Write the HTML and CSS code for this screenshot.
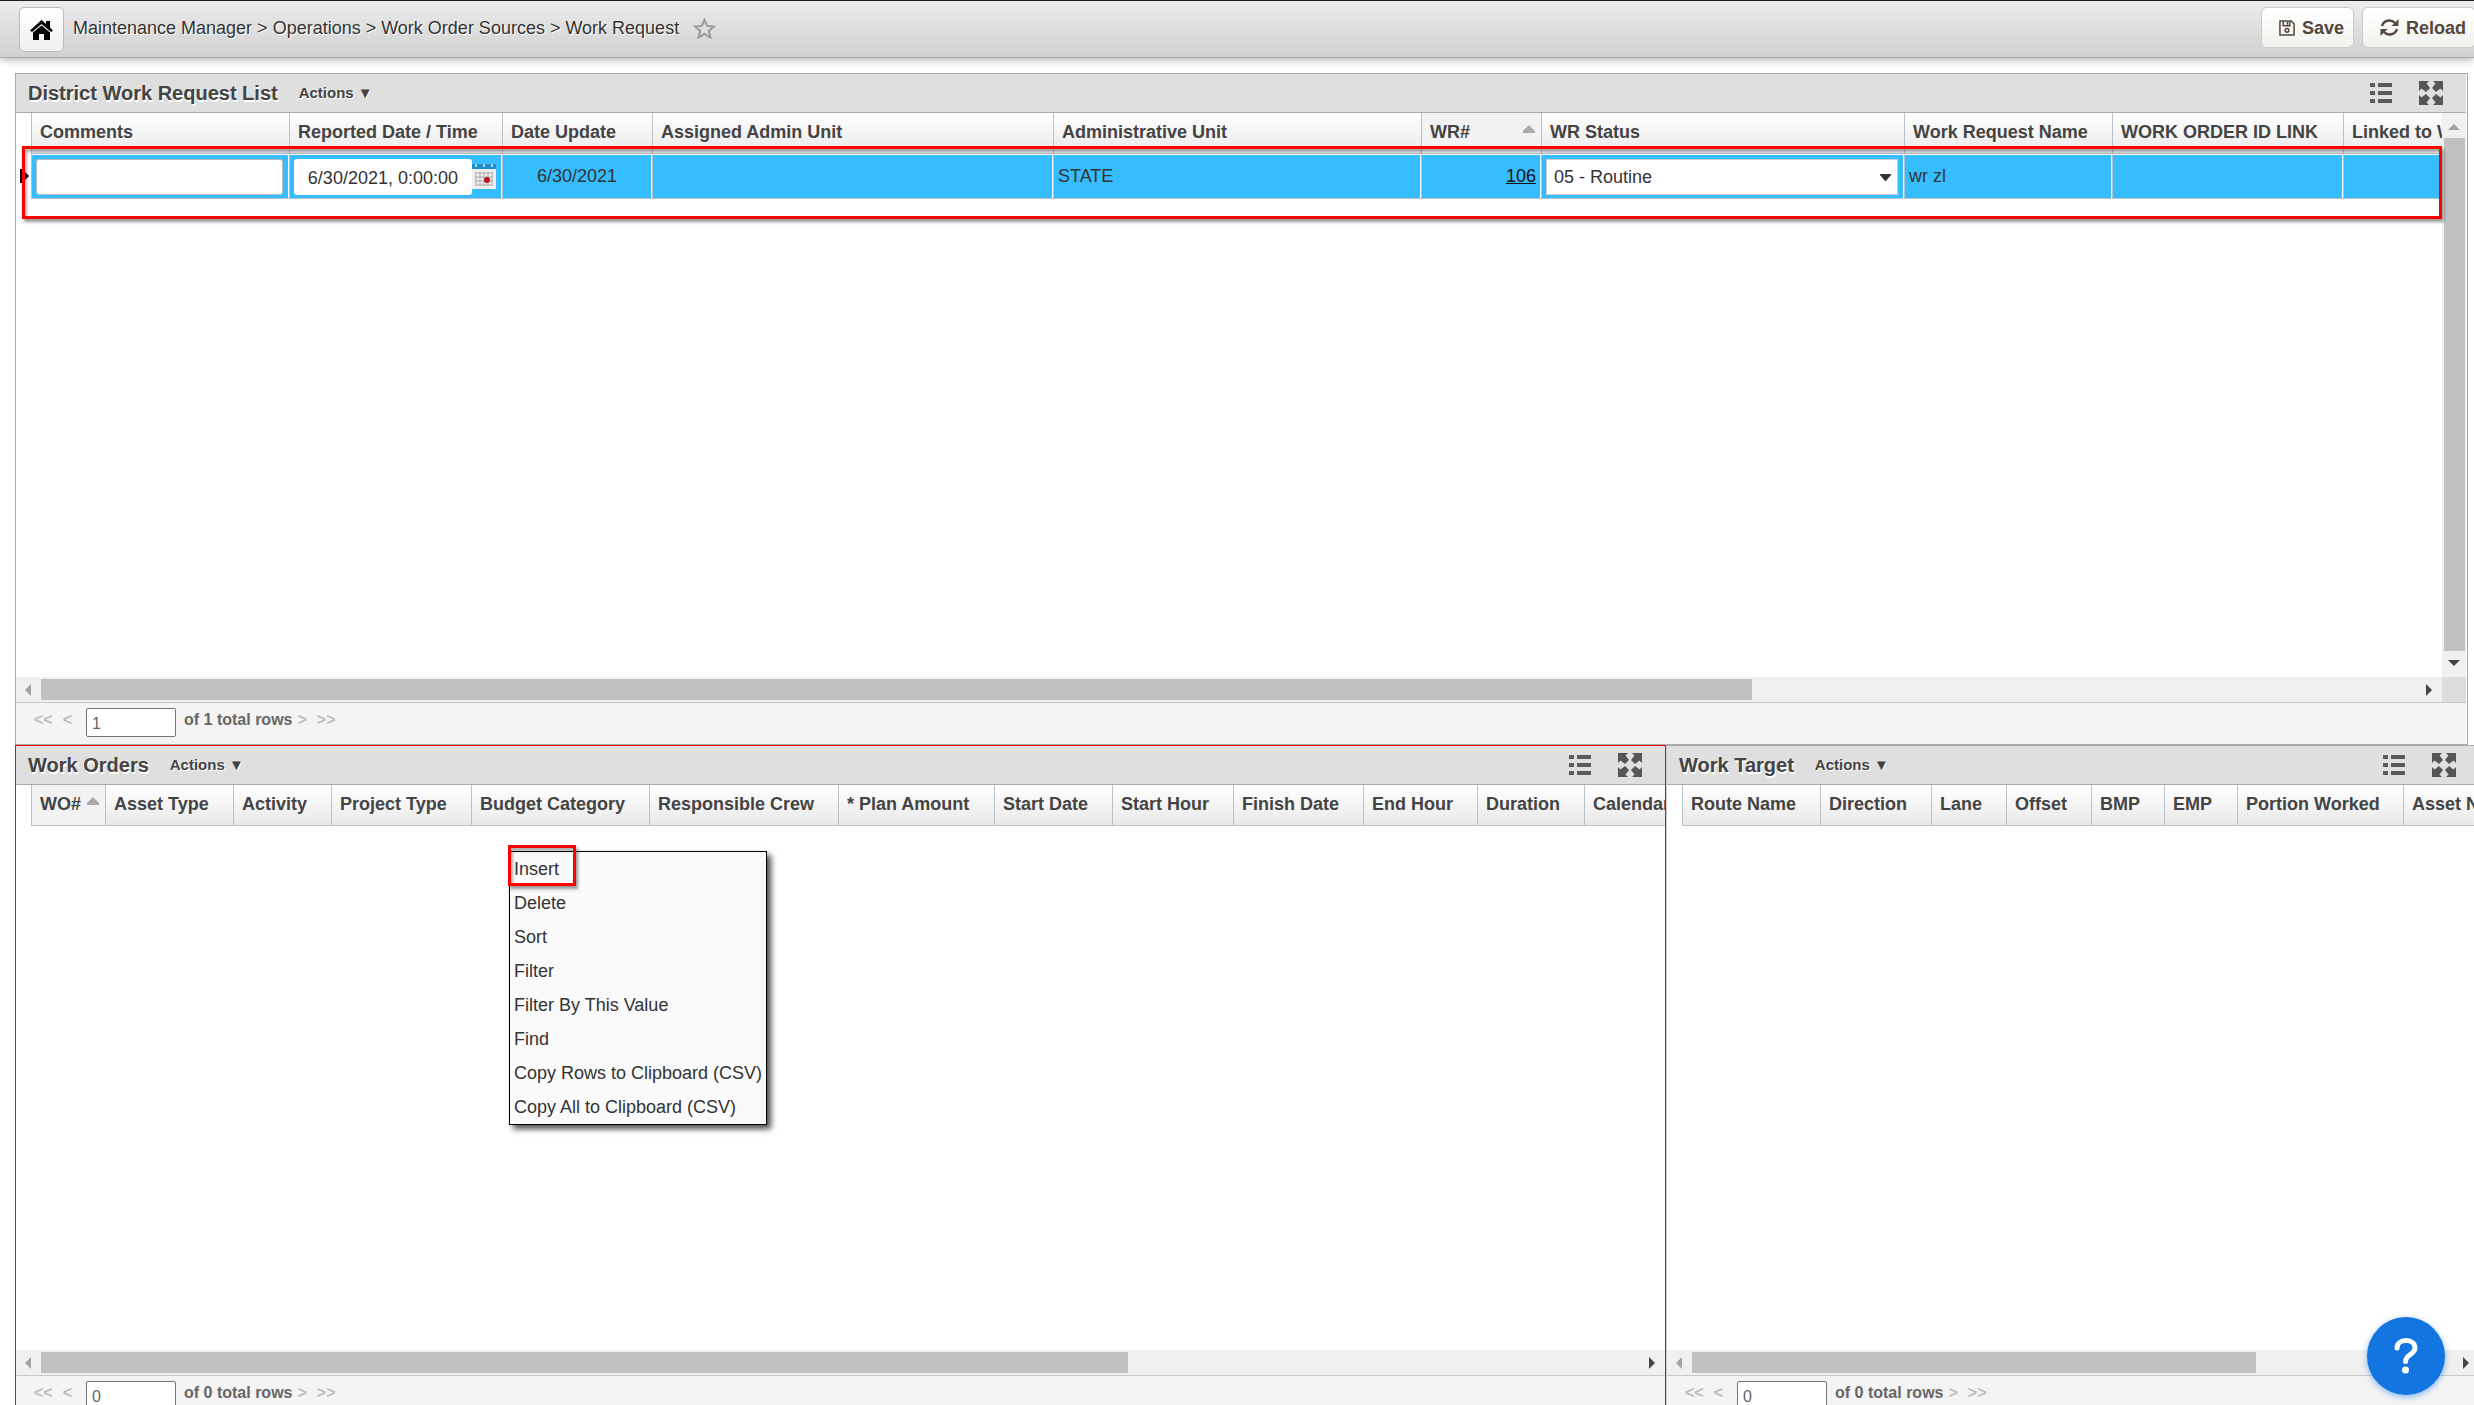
FILE: index.html
```html
<!DOCTYPE html>
<html lang="en">
<head>
<meta charset="utf-8">
<title>Work Request</title>
<link rel="stylesheet" href="styles.css">
</head>
<body>
<svg class="defs" aria-hidden="true">
  <symbol id="i-list" viewBox="0 0 22 20"><path d="M0 0h5v4H0zM8 0h14v4H8zM0 8h5v4H0zM8 8h14v4H8zM0 16h5v4H0zM8 16h14v4H8z" fill="#5a5c5a"/></symbol>
  <symbol id="i-expand" viewBox="0 0 24 24"><path d="M0 0h10L7.500 2.500 11 7 7 11 2.500 7.500 0 10zM24 0v10l-2.500-2.500L17 11l-4-4 3.500-4.500L14 0zM0 24V14l2.500 2.500L7 13l4 4-3.500 4.500L10 24zM24 24H14l2.500-2.500L13 17l4-4 4.500 3.500L24 14z" fill="#555755"/></symbol>
  <symbol id="i-left" viewBox="0 0 6 12"><path d="M6 0v12L0 6z"/></symbol>
  <symbol id="i-right" viewBox="0 0 6 12"><path d="M0 0v12l6-6z"/></symbol>
  <symbol id="i-up" viewBox="0 0 12 6"><path d="M0 6h12L6 0z"/></symbol>
  <symbol id="i-down" viewBox="0 0 12 6"><path d="M0 0h12L6 6z"/></symbol>
</svg>
<div class="page">
  <header class="topbar">
    <button class="home" type="button" aria-label="Home"><svg width="23" height="20" viewBox="0 0 23 20"><path d="M11.500 0L16 4V1h4v6.500L23 10.500l-2 1.500-9.500-8L2 12l-2-1.500z"/><path d="M11.500 5.500L20 12.500V20h-6v-6H9v6H3v-7.500z"/></svg></button>
    <nav class="crumbs">Maintenance Manager &gt; Operations &gt; Work Order Sources &gt; Work Request</nav>
    <svg class="star" width="23" height="21" viewBox="0 0 23 21"><path d="M11.500 1.800l2.700 6.100 6.800.6-5.200 4.400 1.700 6.600-6-3.700-6 3.700 1.700-6.600L2 8.500l6.800-.6z" fill="none" stroke="#999" stroke-width="2"/></svg>
    <div class="tools">
      <button class="tool" type="button"><svg width="16" height="16" viewBox="0 0 17 17" fill="none" stroke="#54473d" stroke-width="1.600"><path d="M1 1h12l3 3v12H1zM4.500 1v5h7V1M9 2v3"/><circle cx="8.500" cy="11" r="2"/></svg>Save</button>
      <button class="tool reload" type="button"><svg width="19" height="19" viewBox="0 0 19 19"><path d="M2 8a7.500 7 0 0 1 13-3M17 11a7.500 7 0 0 1-13 3" fill="none" stroke="#54473d" stroke-width="2.400"/><path d="M18.500 1v7h-7zM.5 18v-7h7z" fill="#54473d"/></svg>Reload</button>
    </div>
  </header>

  <main class="main">
    <section class="panel requests">
      <div class="bar"><h2>District Work Request List</h2><button class="actions" type="button">Actions ▼</button>
        <button class="icon" type="button" aria-label="List view"><svg width="22" height="20"><use href="#i-list"/></svg></button><button class="icon" type="button" aria-label="Expand"><svg width="24" height="24"><use href="#i-expand"/></svg></button></div>
      <div class="view">
        <div class="rows">
          <table class="grid">
            <colgroup><col style="width:15px"><col style="width:258px"><col style="width:213px"><col style="width:150px"><col style="width:401px"><col style="width:368px"><col style="width:120px"><col style="width:363px"><col style="width:208px"><col style="width:231px"><col style="width:200px"></colgroup>
            <thead><tr><td></td><th>Comments</th><th>Reported Date / Time</th><th>Date Update</th><th>Assigned Admin Unit</th><th>Administrative Unit</th><th class="sorted"><div>WR#<svg width="12" height="8" viewBox="0 0 12 8"><path d="M0 8V6l6-6 6 6v2z"/></svg></div></th><th>WR Status</th><th>Work Request Name</th><th>WORK ORDER ID LINK</th><th>Linked to WO</th></tr></thead>
            <tbody><tr>
              <td class="marker"><svg width="9" height="14" viewBox="0 0 9 14"><path d="M0 0h2l7 7-7 7H0z"/></svg></td>
              <td class="field"><input class="comment" type="text" aria-label="Comments"></td>
              <td class="field"><div class="date"><input type="text" value="6/30/2021, 0:00:00" aria-label="Reported Date / Time"><button type="button" aria-label="Pick date"><svg width="24" height="25" viewBox="0 0 24 25"><path d="M0 0h24v5H0z" fill="#168fd0"/><path d="M0 5h24v20H0z" fill="#eee"/><path d="M4 0v3M12 0v3M20 0v3" stroke="#ccc" stroke-width="2"/><path d="M3 9h18M3 13h18M3 17h18M3 21h18M4 8v14M8 8v14M12 8v14M16 8v14M20 8v14" stroke="#aaa"/><circle cx="15" cy="16" r="3" fill="#c4101c"/></svg></button></div></td>
              <td class="center">6/30/2021</td><td></td><td>STATE</td><td class="num"><a href="#wr-106">106</a></td>
              <td class="field"><div class="pick"><select aria-label="WR Status"><option>05 - Routine</option></select><svg width="11" height="7" viewBox="0 0 11 7"><path d="M0 0h11v1L6 7H5L0 1z"/></svg></div></td>
              <td>wr zl</td><td></td><td></td>
            </tr></tbody>
          </table>
        </div>
        <div class="vscroll"><svg width="12" height="6" class="dim"><use href="#i-up"/></svg><div class="thumb"></div><svg width="12" height="6"><use href="#i-down"/></svg></div>
      </div>
      <div class="hscroll"><svg width="6" height="12" class="dim"><use href="#i-left"/></svg><div class="track"><div class="thumb" style="width:72%"></div></div><svg width="6" height="12"><use href="#i-right"/></svg><i class="corner"></i></div>
      <div class="pager"><a href="#first">&lt;&lt;</a><a href="#prev">&lt;</a><input type="text" value="1" aria-label="Row number"><b>of 1 total rows</b><a href="#next">&gt;</a><a href="#last">&gt;&gt;</a></div>
      <div class="mark row-mark"></div>
    </section>

    <div class="lower">
      <section class="panel orders">
        <div class="bar"><h2>Work Orders</h2><button class="actions" type="button">Actions ▼</button>
          <button class="icon" type="button" aria-label="List view"><svg width="22" height="20"><use href="#i-list"/></svg></button><button class="icon" type="button" aria-label="Expand"><svg width="24" height="24"><use href="#i-expand"/></svg></button></div>
        <div class="view"><div class="rows">
          <table class="grid">
            <colgroup><col style="width:15px"><col style="width:74px"><col style="width:128px"><col style="width:98px"><col style="width:140px"><col style="width:178px"><col style="width:189px"><col style="width:156px"><col style="width:118px"><col style="width:121px"><col style="width:130px"><col style="width:114px"><col style="width:107px"><col style="width:150px"></colgroup>
            <thead><tr><td></td><th class="sorted"><div>WO#<svg width="12" height="8" viewBox="0 0 12 8"><path d="M0 8V6l6-6 6 6v2z"/></svg></div></th><th>Asset Type</th><th>Activity</th><th>Project Type</th><th>Budget Category</th><th>Responsible Crew</th><th>* Plan Amount</th><th>Start Date</th><th>Start Hour</th><th>Finish Date</th><th>End Hour</th><th>Duration</th><th>Calendar</th></tr></thead>
          </table>
        </div></div>
        <div class="hscroll"><svg width="6" height="12" class="dim"><use href="#i-left"/></svg><div class="track"><div class="thumb" style="width:68%"></div></div><svg width="6" height="12"><use href="#i-right"/></svg></div>
        <div class="pager"><a href="#first">&lt;&lt;</a><a href="#prev">&lt;</a><input type="text" value="0" aria-label="Row number"><b>of 0 total rows</b><a href="#next">&gt;</a><a href="#last">&gt;&gt;</a></div>
        <div class="menu" role="menu">
          <button type="button" role="menuitem">Insert</button><button type="button" role="menuitem">Delete</button><button type="button" role="menuitem">Sort</button><button type="button" role="menuitem">Filter</button><button type="button" role="menuitem">Filter By This Value</button><button type="button" role="menuitem">Find</button><button type="button" role="menuitem">Copy Rows to Clipboard (CSV)</button><button type="button" role="menuitem">Copy All to Clipboard (CSV)</button>
          <div class="mark item-mark"></div>
        </div>
      </section>

      <section class="panel target">
        <div class="bar"><h2>Work Target</h2><button class="actions" type="button">Actions ▼</button>
          <button class="icon" type="button" aria-label="List view"><svg width="22" height="20"><use href="#i-list"/></svg></button><button class="icon" type="button" aria-label="Expand"><svg width="24" height="24"><use href="#i-expand"/></svg></button></div>
        <div class="view"><div class="rows">
          <table class="grid">
            <colgroup><col style="width:15px"><col style="width:138px"><col style="width:111px"><col style="width:75px"><col style="width:85px"><col style="width:73px"><col style="width:73px"><col style="width:166px"><col style="width:150px"></colgroup>
            <thead><tr><td></td><th>Route Name</th><th>Direction</th><th>Lane</th><th>Offset</th><th>BMP</th><th>EMP</th><th>Portion Worked</th><th>Asset Name</th></tr></thead>
          </table>
        </div></div>
        <div class="hscroll"><svg width="6" height="12" class="dim"><use href="#i-left"/></svg><div class="track"><div class="thumb" style="width:74%"></div></div><svg width="6" height="12"><use href="#i-right"/></svg></div>
        <div class="pager"><a href="#first">&lt;&lt;</a><a href="#prev">&lt;</a><input type="text" value="0" aria-label="Row number"><b>of 0 total rows</b><a href="#next">&gt;</a><a href="#last">&gt;&gt;</a></div>
      </section>
    </div>
  </main>
</div>
<button class="help" type="button" aria-label="Help"><svg width="24" height="36" viewBox="0 0 24 36"><path d="M3 10c0-4.500 3.500-7.500 9-7.500s9 3 9 7.500c0 6.500-9.500 6.500-9.500 13.500" fill="none" stroke="#fff" stroke-width="5" stroke-linecap="round"/><circle cx="11.500" cy="32" r="3.500" fill="#fff"/></svg></button>
</body>
</html>
```
FILE: styles.css
```css
* { box-sizing: border-box; }
body { margin: 0; height: 100vh; overflow: hidden; background: #fff; color: #333; font: 18px/20px "Liberation Sans", Arial, sans-serif; }
button, input, select { font: inherit; color: inherit; margin: 0; padding: 0; border: 0; background: none; border-radius: 0; }
svg { display: block; flex: none; }
.defs { position: absolute; width: 0; height: 0; }

/* The lower pagers run slightly past the fold */
.page { display: flex; flex-direction: column; height: calc(100vh + 12px); }

.topbar { flex: none; display: flex; align-items: flex-start; height: 58px; padding: 6px 0 0 19px; border-top: 1px solid #231f20; border-bottom: 1px solid #aaa; background: linear-gradient(#ececec, #d0d0d0); box-shadow: 0 2px 8px rgba(0,0,0,.3); }
.home { display: grid; place-items: center; width: 45px; height: 45px; border: 1px solid #bbb; border-radius: 5px; background: linear-gradient(#fff, #f0f0f0); }
.crumbs { margin: 11px 14px 0 9px; text-shadow: 1px 1px 0 #fff; }
.star { margin-top: 11px; }
.tools { display: flex; gap: 8px; margin-left: auto; }
.tool { display: flex; align-items: center; gap: 7px; height: 41px; padding: 0 9px 0 17px; border: 1px solid #ccc; border-radius: 6px; background: linear-gradient(#fff, #f1f2ec); color: #54473d; font-weight: bold; }
.reload { margin-right: -2px; }

.main { flex: 1; min-height: 0; display: grid; grid-template-rows: 1fr 1fr; padding: 15px 0 0 15px; }
.panel { position: relative; display: flex; flex-direction: column; min-width: 0; }
.requests { margin-right: 6px; padding-right: 1px; border: 1px solid #aaa; }
.lower { display: grid; grid-template-columns: 1651fr 813fr; margin-right: -5px; }
.orders { border: 1px solid #f00; border-bottom: 0; }
.target { border-top: 1px solid #aaa; border-left: 1px solid #ccc; }

.bar { flex: none; display: flex; align-items: center; height: 39px; padding: 0 23px 0 12px; background: #dfdfdf; border-bottom: 1px solid #aaa; color: #444; }
.bar h2 { margin: 0 21px 0 0; font-size: 20px; font-weight: bold; text-shadow: 1px 2px 0 #fff; }
.actions { margin-right: auto; font-size: 15px; font-weight: bold; text-shadow: 1px 1px 0 #fff; }
.icon + .icon { margin-left: 27px; }

.view { flex: 1; min-height: 0; display: flex; }
.rows { flex: 1; min-width: 0; overflow: hidden; }
.grid { width: 0; table-layout: fixed; border-collapse: separate; border-spacing: 0; }
.grid td, .grid th { padding: 0; }
.grid th { height: 41px; padding: 0 0 3px 8px; border-left: 1px solid #b8c0ca; border-bottom: 1px solid #b8c0ca; background: linear-gradient(#fff, #e9e9e9); color: #444; text-align: left; white-space: nowrap; overflow: hidden; }
.grid .sorted { background: #f2f2f2; }
.sorted div { display: flex; justify-content: space-between; padding-right: 6px; }
.sorted svg { margin-top: 3px; fill: #aaa; }
.grid tbody td { height: 45px; padding: 0 4px 2px; background: #36bdff; border: 1px solid #fff; border-left-color: #b8c0ca; border-bottom-color: #b8c0ca; }
.grid tbody .marker { background: #fff; border: 0; }
.grid tbody .field { padding: 0 5px 0 4px; }
.center { text-align: center; }
.num { text-align: right; }
.num a { color: #111; }
.comment { width: 100%; height: 36px; background: #fff; border: 1px solid #bbb; border-radius: 3px; padding: 0 8px; display: block; }
.date { display: flex; align-items: center; }
.date input { flex: 1; min-width: 0; height: 36px; background: #fff; border-radius: 3px; padding: 4px 14px 0 0; text-align: right; }
.pick { position: relative; }
.pick select { display: block; width: 100%; height: 36px; padding: 0 7px; background: #fff; border: 1px solid #ccc; appearance: none; }
.pick svg { position: absolute; right: 7px; top: 15px; fill: #333; pointer-events: none; }

.vscroll { display: flex; flex-direction: column; align-items: center; justify-content: space-between; width: 24px; padding: 11px 2px; background: #f0f0f0; fill: #444; }
.vscroll .thumb { flex: 1; width: 21px; margin: 8px 0 9px; }
.thumb { background: #c1c1c1; }
.hscroll { flex: none; display: flex; align-items: center; height: 25px; padding-left: 9px; background: #f0f0f0; fill: #444; }
.hscroll > svg { margin-right: 10px; }
.hscroll .dim, .vscroll .dim { fill: #a3a3a3; }
.track { flex: 1; margin-right: 9px; }
.track .thumb { height: 21px; }
.corner { width: 24px; height: 25px; background: #dcdcdc; }

.pager { flex: none; display: flex; height: 42px; padding: 5px 0 0 18px; border-top: 1px solid #c8c8c8; background: #f4f4f4; font-size: 16px; line-height: 23px; color: #666; }
.pager a { color: #bbb; text-decoration: none; font-weight: bold; margin-right: 10px; }
.pager input { width: 90px; height: 29px; margin: 0 8px 0 4px; padding: 2px 5px 0; background: #fff; border: 1px solid #767676; border-radius: 2px; }
.pager b { margin-right: 5px; }

.menu { position: absolute; left: 493px; top: 105px; display: flex; flex-direction: column; padding: 0 4px; border: 1px solid #000; background: #fafafa; box-shadow: 4px 4px 6px rgba(0,0,0,.7); }
.menu button { height: 34px; text-align: left; white-space: nowrap; }
.mark { position: absolute; border: 3px solid #f00; box-shadow: 2px 3px 3px rgba(0,0,0,.4), inset 2px 3px 3px rgba(0,0,0,.3); pointer-events: none; }
.row-mark { left: 6px; right: 25px; top: 72px; height: 73px; }
.item-mark { left: -2px; top: -7px; width: 68px; height: 41px; }

.help { position: fixed; right: 29px; bottom: 10px; width: 78px; height: 78px; display: grid; place-items: center; border-radius: 50%; background: #1275e0; box-shadow: 0 2px 6px rgba(18,117,224,.5); }
```
